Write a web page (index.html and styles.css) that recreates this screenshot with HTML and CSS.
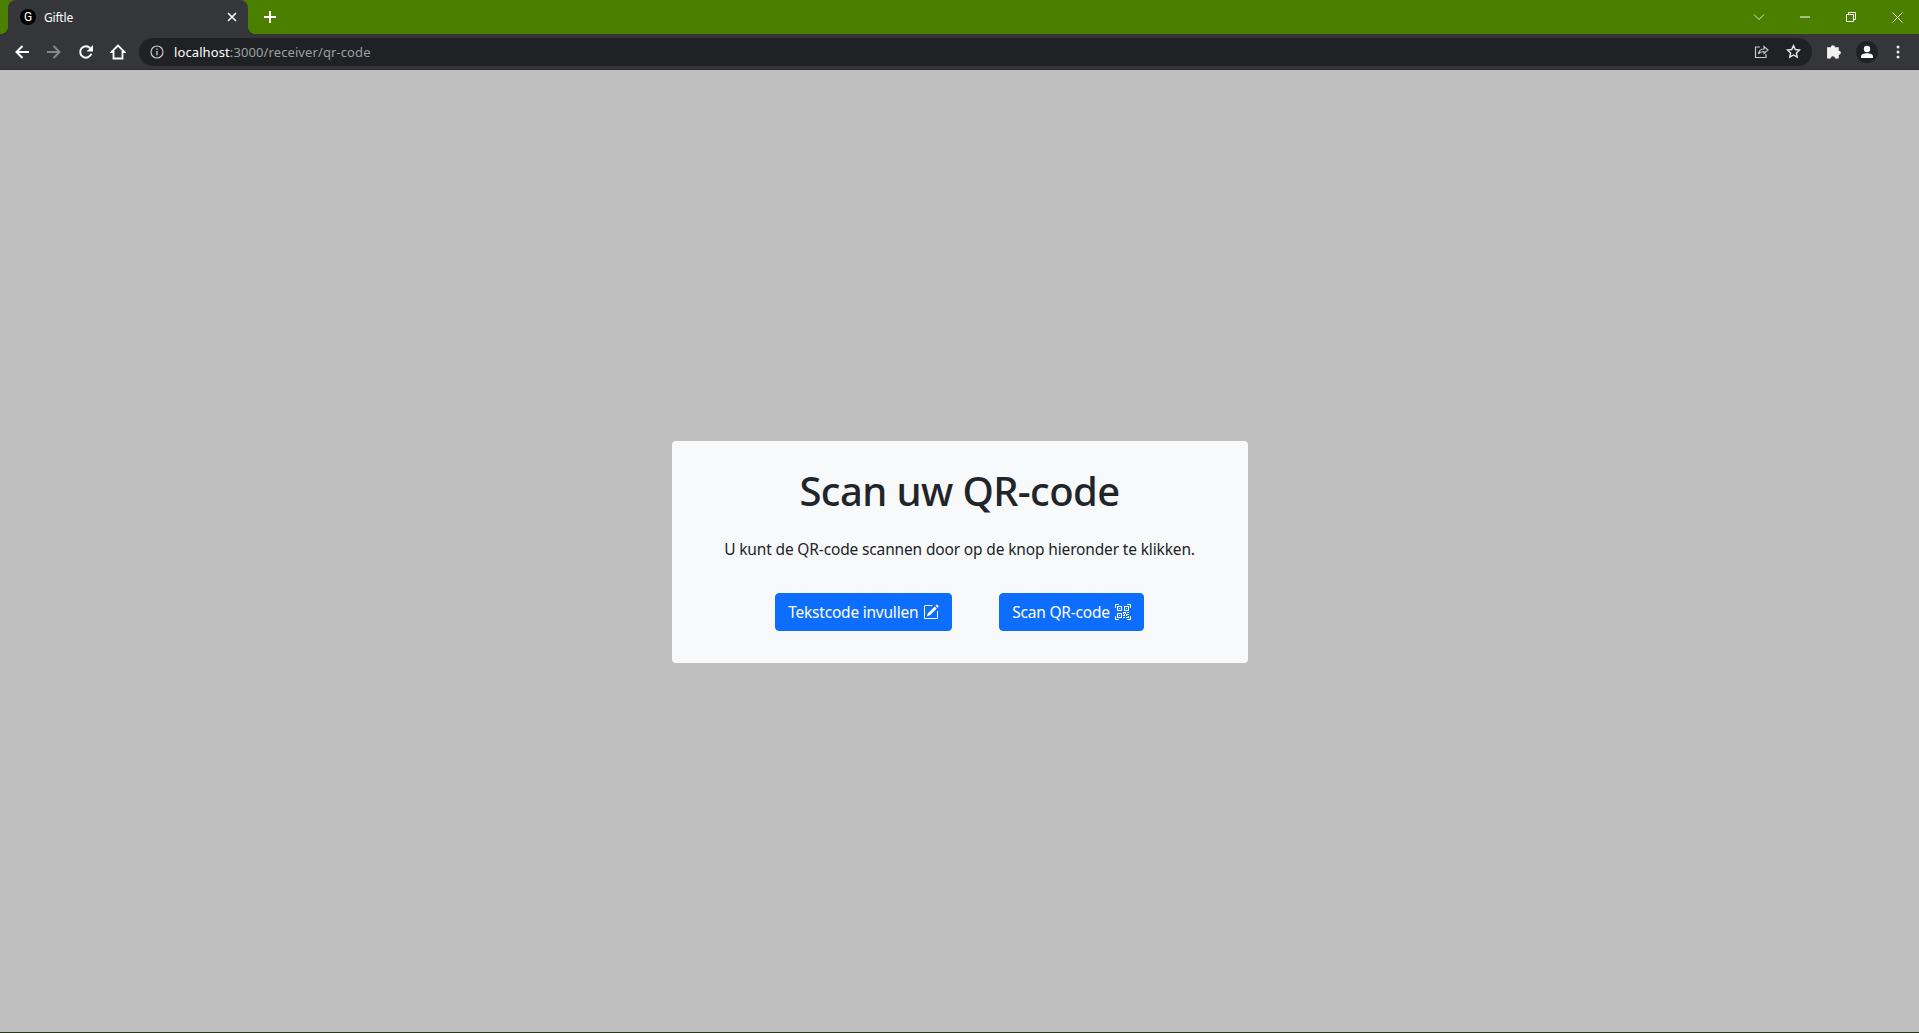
FILE: index.html
```html
<!DOCTYPE html>
<html lang="nl">
<head>
  <meta charset="UTF-8">
  <title>Giftle</title>
  <link rel="stylesheet" href="styles.css">
</head>
<body>

  <div class="tabbar">
    <div class="tab">
      <span class="favicon">G</span>
      <span class="tab-title">Giftle</span>
      <svg class="tab-close" width="10" height="10" viewBox="0 0 10 10"><path d="M1 1l8 8M9 1l-8 8" stroke="#fff" stroke-width="1.6" fill="none"/></svg>
    </div>
    <svg class="new-tab" width="14" height="14" viewBox="0 0 14 14"><path d="M7 1v12M1 7h12" stroke="#fff" stroke-width="2" fill="none"/></svg>
    <div class="window-controls">
      <svg width="12" height="8" viewBox="0 0 12 8"><path d="M1 1.5l5 5 5-5" stroke="#dfe8d0" stroke-width="1" fill="none"/></svg>
      <svg class="ctl-min" width="10" height="2" viewBox="0 0 10 2"><path d="M0 1h10" stroke="#fff" stroke-width="1"/></svg>
      <svg class="ctl-max" width="10" height="10" viewBox="0 0 10 10"><path d="M.5 2.5h7v7h-7zM2.5 2.5v-2h7v7h-2" stroke="#fff" stroke-width="1" fill="none"/></svg>
      <svg class="ctl-close" width="11" height="11" viewBox="0 0 11 11"><path d="M.5.5l10 10M10.5.5l-10 10" stroke="#fff" stroke-width="1" fill="none"/></svg>
    </div>
  </div>

  <div class="toolbar">
    <svg class="tool" width="16" height="16" viewBox="0 0 16 16"><path d="M15 8H2.500M8.500 2l-6 6 6 6" stroke="#fff" stroke-width="2" fill="none"/></svg>
    <svg class="tool" width="16" height="16" viewBox="0 0 16 16"><path d="M1 8h12.500M7.500 2l6 6-6 6" stroke="#85878a" stroke-width="2" fill="none"/></svg>
    <svg class="tool" width="16" height="16" viewBox="0 0 16 16"><path d="M13.300 9.800A5.700 5.700 0 1 1 12.200 4.200" stroke="#fff" stroke-width="2" fill="none"/><path d="M15 1v6.500H8.500z" fill="#fff"/></svg>
    <svg class="tool" width="16" height="16" viewBox="0 0 16 16"><path d="M8 1.500L1.500 8H3.500v6.500h9V8h2z" stroke="#fff" stroke-width="1.800" fill="none"/></svg>
    <div class="omnibox">
      <svg width="14" height="14" viewBox="0 0 14 14"><circle cx="7" cy="7" r="6" stroke="#c8c9cb" stroke-width="1.200" fill="none"/><path d="M7 6v4.200M7 3.500v1.300" stroke="#c8c9cb" stroke-width="1.300"/></svg>
      <span class="url"><span class="url-host">localhost</span>:3000/receiver/qr-code</span>
      <svg class="omni-share" width="15" height="15" viewBox="0 0 15 15"><path d="M6 3H1.500v10.500H12V10" stroke="#c8c9cb" stroke-width="1.200" fill="none"/><path d="M4.500 10C5 6.500 7.500 5 10 5V2.500L14 6l-4 3.500V7.500C8 7.500 6 8 4.500 10z" stroke="#c8c9cb" stroke-width="1.200" fill="none"/></svg>
      <svg class="omni-star" width="15" height="15" viewBox="0 0 15 15"><path d="M7.500 1.600l1.800 3.900 4.200.5-3.100 2.900.8 4.200-3.700-2.100-3.700 2.100.8-4.200L1.500 6l4.200-.5z" stroke="#e8e9ea" stroke-width="1.400" fill="none"/></svg>
    </div>
    <svg class="ext" width="17" height="17" viewBox="0 0 16 16"><path d="M1 5h3.500a2 2 0 1 1 4 0H12v3.200a2 2 0 1 1 0 4V15.500H8.500a2 2 0 1 0-4 0H1z" fill="#f1f1f1" transform="translate(0 -1)"/></svg>
    <span class="avatar"><svg width="14" height="14" viewBox="0 0 14 14"><circle cx="7" cy="4" r="3.200" fill="#fff"/><path d="M1 13v-1.500C1 9.500 4 8.300 7 8.300s6 1.200 6 3.200V13z" fill="#fff"/></svg></span>
    <svg class="menu" width="4" height="14" viewBox="0 0 4 14"><circle cx="2" cy="2" r="1.500" fill="#e8e9ea"/><circle cx="2" cy="7" r="1.500" fill="#e8e9ea"/><circle cx="2" cy="12" r="1.500" fill="#e8e9ea"/></svg>
  </div>

  <main class="page">
    <div class="card">
      <h1>Scan uw QR-code</h1>
      <p>U kunt de QR-code scannen door op de knop hieronder te klikken.</p>
      <div class="knoppen">
        <button class="btn">Tekstcode invullen
          <svg width="16" height="16" viewBox="0 0 16 16" fill="#fff"><path d="M15.502 1.940a.5.5 0 0 1 0 .706L14.459 3.690l-2-2L13.502.646a.5.5 0 0 1 .707 0l1.293 1.293zm-1.750 2.456-2-2L4.939 9.210a.5.5 0 0 0-.121.196l-.805 2.414a.25.25 0 0 0 .316.316l2.414-.805a.5.5 0 0 0 .196-.12l6.813-6.814z"/><path fill-rule="evenodd" d="M1 13.500A1.500 1.500 0 0 0 2.500 15h11a1.500 1.500 0 0 0 1.500-1.500v-6a.5.5 0 0 0-1 0v6a.5.5 0 0 1-.5.5h-11a.5.5 0 0 1-.5-.5v-11a.5.5 0 0 1 .5-.5H9a.5.5 0 0 0 0-1H2.500A1.500 1.500 0 0 0 1 2.500v11z"/></svg>
        </button>
        <button class="btn">Scan QR-code
          <svg width="16" height="16" viewBox="0 0 16 16" fill="#fff"><path d="M0 .5A.5.5 0 0 1 .5 0h3a.5.5 0 0 1 0 1H1v2.500a.5.5 0 0 1-1 0v-3Zm12 0a.5.5 0 0 1 .5-.5h3a.5.5 0 0 1 .5.5v3a.5.5 0 0 1-1 0V1h-2.500a.5.5 0 0 1-.5-.5ZM.5 12a.5.5 0 0 1 .5.5V15h2.500a.5.5 0 0 1 0 1h-3a.5.5 0 0 1-.5-.5v-3a.5.5 0 0 1 .5-.5Zm15 0a.5.5 0 0 1 .5.5v3a.5.5 0 0 1-.5.5h-3a.5.5 0 0 1 0-1H15v-2.500a.5.5 0 0 1 .5-.5ZM4 4h1v1H4V4Z"/><path d="M7 2H2v5h5V2ZM3 3h3v3H3V3Zm2 8H4v1h1v-1Z"/><path d="M7 9H2v5h5V9Zm-4 1h3v3H3v-3Zm8-6h1v1h-1V4Z"/><path d="M9 2h5v5H9V2Zm1 1v3h3V3h-3ZM8 8v2h1v1H8v1h2v-2h1v2h1v-1h2v-1h-3V8H8Zm2 2H9V9h1v1Zm4 2h-1v1h-2v1h3v-2Zm-4 2v-1H8v1h2Z"/><path d="M12 9h2V8h-2v1Z"/></svg>
        </button>
      </div>
    </div>
  </main>

</body>
</html>
```

FILE: styles.css
```css
* {
  box-sizing: border-box;
}

html, body {
  height: 100%;
}

body {
  margin: 0;
  display: flex;
  flex-direction: column;
  font-family: "Noto Sans", "Open Sans", sans-serif;
  background-color: #bfbfbf;
  border-bottom: 1px solid #25381a;
}

/* browser chrome */
.tabbar {
  height: 34px;
  flex: none;
  display: flex;
  align-items: flex-end;
  padding-left: 8px;
  background-color: #4a7f00;
}

.tab {
  position: relative;
  width: 240px;
  height: 34px;
  display: flex;
  align-items: center;
  padding: 0 11px 0 12px;
  background-color: #35363a;
  border-radius: 8px 8px 0 0;
  color: #fff;
  font-size: 12px;
  letter-spacing: -0.2px;
}

.tab::before,
.tab::after {
  content: "";
  position: absolute;
  bottom: 0;
  width: 8px;
  height: 8px;
}

.tab::before {
  right: 100%;
  background: radial-gradient(circle at 0 0, transparent 8px, #35363a 8px);
}

.tab::after {
  left: 100%;
  background: radial-gradient(circle at 100% 0, transparent 8px, #35363a 8px);
}

.favicon {
  width: 16px;
  height: 16px;
  margin-right: 8px;
  border-radius: 50%;
  background-color: #000;
  color: #fff;
  font-family: Roboto, sans-serif;
  font-size: 12px;
  letter-spacing: 0;
  line-height: 16px;
  text-align: center;
}

.tab-title {
  flex: 1;
}

.new-tab {
  margin: 0 0 10px 15px;
}

.window-controls {
  margin-left: auto;
  height: 34px;
  display: flex;
  align-items: center;
  padding-right: 16px;
}

.ctl-min {
  margin-left: 35px;
}

.ctl-max {
  margin-left: 36px;
}

.ctl-close {
  margin-left: 36px;
}

.toolbar {
  height: 36px;
  flex: none;
  display: flex;
  align-items: center;
  padding: 0 19px 0 14px;
  background-color: #35363a;
  border-bottom: 1px solid #2c2d30;
}

.tool {
  margin-right: 16px;
}

.omnibox {
  flex: 1;
  height: 28px;
  display: flex;
  align-items: center;
  margin-left: -3px;
  padding: 0 11px;
  background-color: #202124;
  border-radius: 14px;
}

.url {
  flex: 1;
  margin-left: 10px;
  color: #9aa0a6;
  font-size: 13px;
  letter-spacing: 0.1px;
}

.url-host {
  color: #fff;
}

.omni-star {
  margin-left: 17px;
}

.ext {
  margin-left: 14px;
}

.avatar {
  width: 22px;
  height: 22px;
  display: flex;
  align-items: center;
  justify-content: center;
  margin-left: 13px;
  background-color: #202124;
  border-radius: 50%;
}

.menu {
  margin-left: 18px;
}

/* page */
.page {
  flex: 1;
  display: flex;
  align-items: center;
  justify-content: center;
  padding-top: 2px;
}

.card {
  width: 576px;
  height: 222px;
  padding-top: 26px;
  background-color: #f8f9fa;
  border-radius: 4px;
  text-align: center;
  color: #212529;
}

h1 {
  margin: 0 0 22px;
  font-size: 40px;
  font-weight: 500;
  letter-spacing: -0.6px;
  line-height: 48px;
}

p {
  margin: 0 0 32px;
  font-size: 15.5px;
  letter-spacing: -0.15px;
  line-height: 24px;
}

.knoppen {
  display: flex;
  justify-content: center;
  gap: 47px;
}

.btn {
  height: 38px;
  display: flex;
  align-items: center;
  gap: 5px;
  padding: 0 12px;
  border: 1px solid #0d6efd;
  border-radius: 4px;
  background-color: #0d6efd;
  color: #fff;
  font-family: inherit;
  font-size: 15.5px;
  letter-spacing: -0.22px;
}
```
